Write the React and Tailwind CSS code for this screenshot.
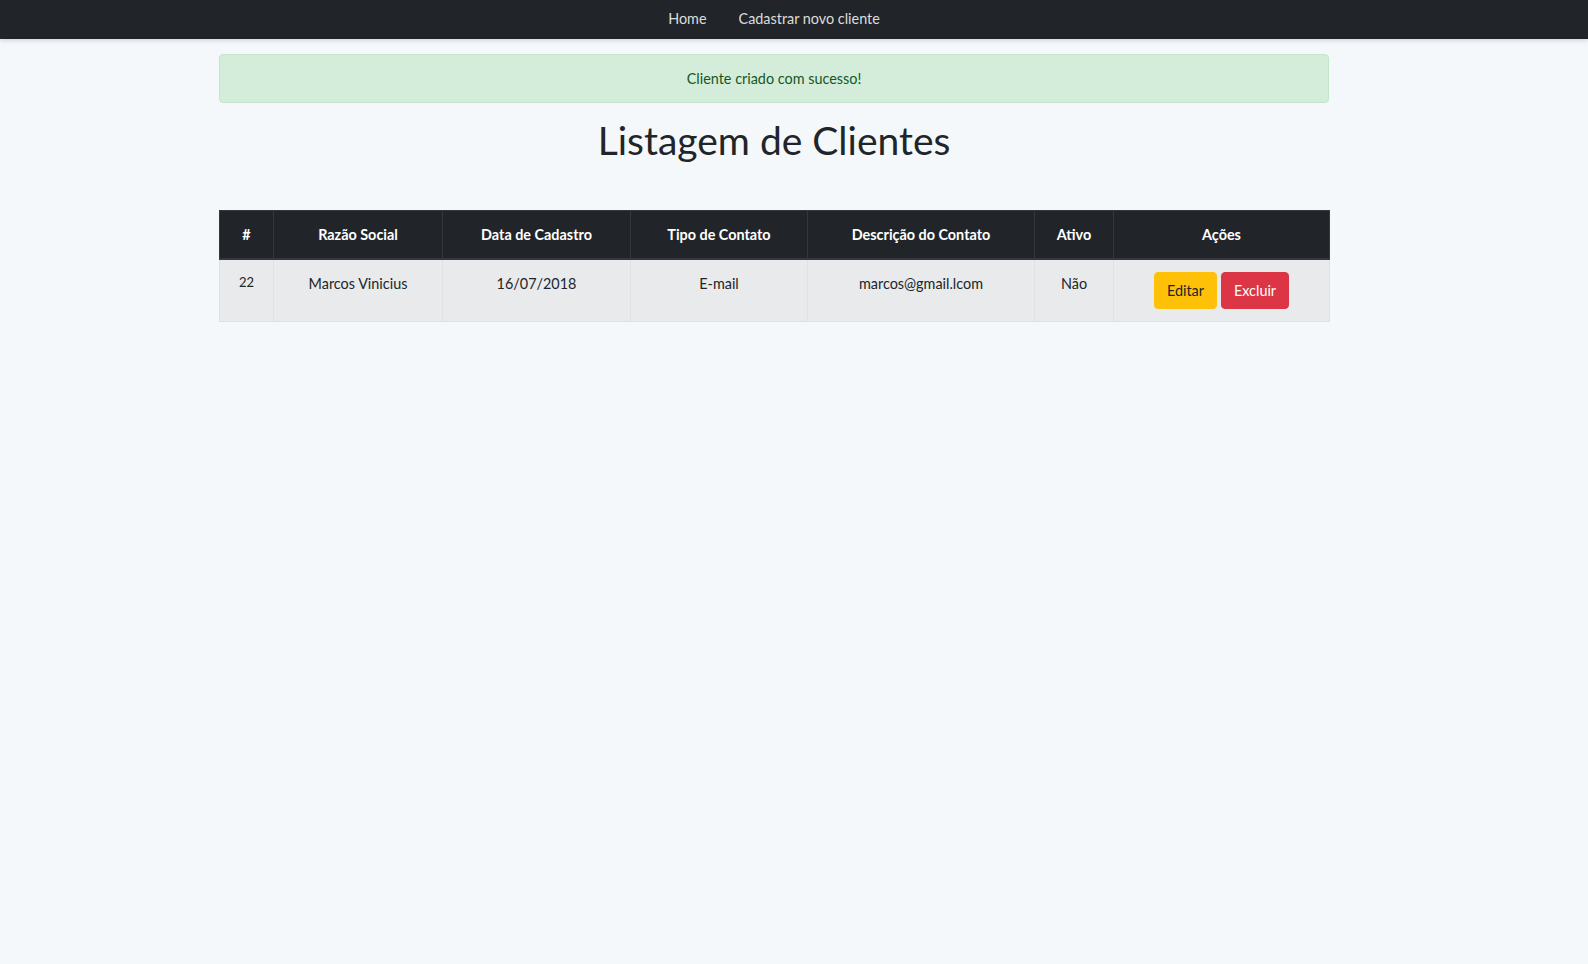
import React from "react";

const columns = [
  { label: "#", width: "w-[54px]" },
  { label: "Razão Social", width: "w-[169px]" },
  { label: "Data de Cadastro", width: "w-[188px]" },
  { label: "Tipo de Contato", width: "w-[177px]" },
  { label: "Descrição do Contato", width: "w-[227px]" },
  { label: "Ativo", width: "w-[79px]" },
  { label: "Ações", width: "w-[216px]" },
];

const clientes = [
  {
    id: 22,
    razaoSocial: "Marcos Vinicius",
    dataCadastro: "16/07/2018",
    tipoContato: "E-mail",
    descricaoContato: "marcos@gmail.lcom",
    ativo: "Não",
  },
];

export default function App() {
  return (
    <div className="min-h-screen bg-[#f5f8fa] text-[#212529] text-[14.4px] leading-[1.6] font-['Lato','Noto_Sans',sans-serif]">
      {/* Navbar */}
      <nav className="bg-[#212529] shadow-[0_2px_4px_rgba(0,0,0,0.12)]">
        <div className="pr-[40px]">
          <ul className="flex justify-center">
            <li>
              <a href="#" className="block px-4 pt-[7px] pb-[9px] text-[rgba(255,255,255,0.85)]">
                Home
              </a>
            </li>
            <li>
              <a href="#" className="block px-4 pt-[7px] pb-[9px] text-[rgba(255,255,255,0.85)]">
                Cadastrar novo cliente
              </a>
            </li>
          </ul>
        </div>
      </nav>

      <div className="pr-[40px]">
        <main className="mx-auto w-[1110px] pt-[15px]">
          {/* Alert */}
          <div className="rounded-[4px] border border-[#c3e6cb] bg-[#d4edda] px-5 py-3 text-center text-[#155724]">
            Cliente criado com sucesso!
          </div>

          <h1 className="mt-[14px] text-center text-[39px] font-normal leading-[1.2] text-[#212529]">
            Listagem de Clientes
          </h1>

          {/* Table */}
          <table className="mt-[46px] w-full table-fixed border-collapse">
            <thead>
              <tr className="bg-[#212529] text-white">
                {columns.map((c) => (
                  <th
                    key={c.label}
                    className={`${c.width} border border-[#32383e] border-b-2 px-3 py-3 text-center font-bold`}
                  >
                    {c.label}
                  </th>
                ))}
              </tr>
            </thead>
            <tbody>
              {clientes.map((c) => (
                <tr key={c.id} className="bg-[#e9eaec]">
                  <td className="border border-[#dee2e6] px-3 py-3 text-center align-top text-[13px]">
                    {c.id}
                  </td>
                  <td className="border border-[#dee2e6] px-3 py-3 text-center align-top">
                    {c.razaoSocial}
                  </td>
                  <td className="border border-[#dee2e6] px-3 py-3 text-center align-top">
                    {c.dataCadastro}
                  </td>
                  <td className="border border-[#dee2e6] px-3 py-3 text-center align-top">
                    {c.tipoContato}
                  </td>
                  <td className="border border-[#dee2e6] px-3 py-3 text-center align-top">
                    {c.descricaoContato}
                  </td>
                  <td className="border border-[#dee2e6] px-3 py-3 text-center align-top">
                    {c.ativo}
                  </td>
                  <td className="border border-[#dee2e6] px-3 py-3 text-center align-top">
                    <div className="flex justify-center gap-1">
                      <button
                        type="button"
                        className="rounded-[4px] border border-[#ffc107] bg-[#ffc107] px-3 py-1.5 leading-[1.6] text-[#212529]"
                      >
                        Editar
                      </button>
                      <button
                        type="button"
                        className="rounded-[4px] border border-[#dc3545] bg-[#dc3545] px-3 py-1.5 leading-[1.6] text-white"
                      >
                        Excluir
                      </button>
                    </div>
                  </td>
                </tr>
              ))}
            </tbody>
          </table>
        </main>
      </div>
    </div>
  );
}
